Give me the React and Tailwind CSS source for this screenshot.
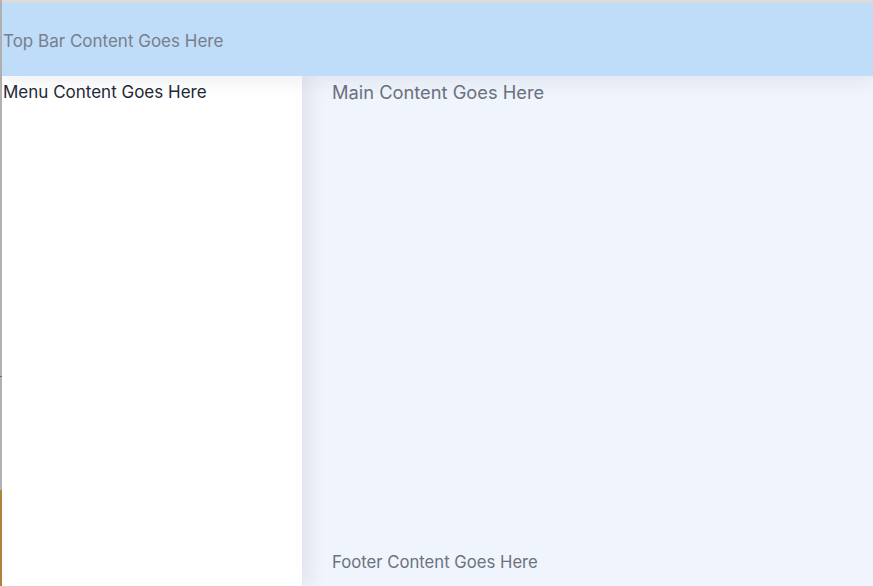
export default function App() {
  return (
    <div className="flex h-[586px] w-[873px] overflow-hidden bg-white font-['Inter',sans-serif]">
      {/* desktop edge peeking through on the left */}
      <div className="flex w-[2px] flex-col">
        <div className="h-[376px] bg-[#b4b4b4]" />
        <div className="h-px bg-[#6e6e6e]" />
        <div className="h-[113px] bg-[#b4b4b4]" />
        <div className="flex-1 bg-[#b3843f]" />
      </div>

      <div className="flex flex-1 flex-col">
        <div className="h-[3px] bg-[#dedede]" />

        {/* Top bar */}
        <div className="relative z-10 flex h-[73px] items-center bg-[#bfdcf8] px-px pt-[4px] text-[17px] text-[#767f8e] shadow-[0_6px_18px_rgba(30,40,70,0.07)]">
          Top Bar Content Goes Here
        </div>

        <div className="flex flex-1">
          {/* Menu */}
          <div className="relative w-[300px] bg-white px-px pt-[4px] text-[17px] text-[#1f2937] shadow-[6px_0_18px_rgba(30,40,70,0.09)]">
            Menu Content Goes Here
          </div>

          {/* Main */}
          <div className="flex flex-1 flex-col justify-between bg-[#f0f4fc] pl-[30px] pb-[11px] pt-[3px] text-[#6b7280]">
            <div className="text-[18.3px]">Main Content Goes Here</div>
            <div className="text-[16.7px]">Footer Content Goes Here</div>
          </div>
        </div>
      </div>
    </div>
  );
}
